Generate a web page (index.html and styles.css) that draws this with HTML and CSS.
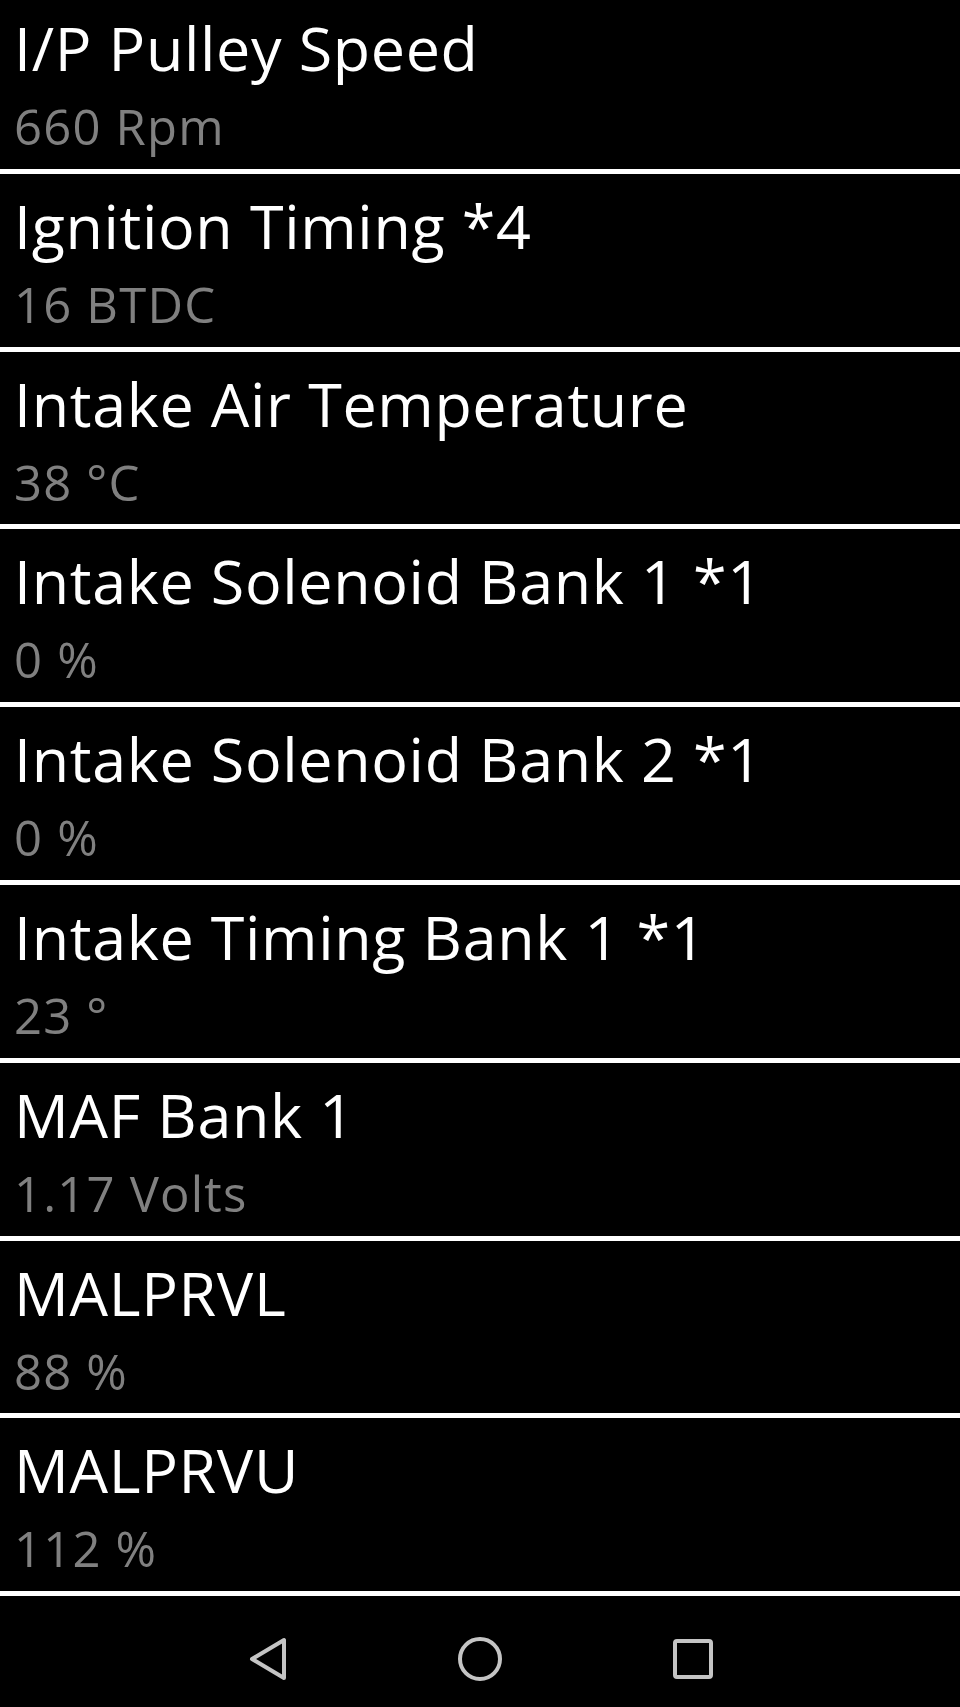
FILE: index.html
```html
<!DOCTYPE html>
<html lang="en">
<head>
  <meta charset="UTF-8">
  <meta name="viewport" content="width=device-width, initial-scale=1.0">
  <title>Live Data</title>
  <link rel="stylesheet" href="styles.css">
</head>
<body>
  <ul class="pid-list">
    <li class="pid-row">
      <div class="pid-name">I/P Pulley Speed</div>
      <div class="pid-value">660 Rpm</div>
    </li>
    <li class="pid-row">
      <div class="pid-name">Ignition Timing *4</div>
      <div class="pid-value">16 BTDC</div>
    </li>
    <li class="pid-row">
      <div class="pid-name">Intake Air Temperature</div>
      <div class="pid-value">38 °C</div>
    </li>
    <li class="pid-row">
      <div class="pid-name">Intake Solenoid Bank 1 *1</div>
      <div class="pid-value">0 %</div>
    </li>
    <li class="pid-row">
      <div class="pid-name">Intake Solenoid Bank 2 *1</div>
      <div class="pid-value">0 %</div>
    </li>
    <li class="pid-row">
      <div class="pid-name">Intake Timing Bank 1 *1</div>
      <div class="pid-value">23 °</div>
    </li>
    <li class="pid-row">
      <div class="pid-name">MAF Bank 1</div>
      <div class="pid-value">1.17 Volts</div>
    </li>
    <li class="pid-row">
      <div class="pid-name">MALPRVL</div>
      <div class="pid-value">88 %</div>
    </li>
    <li class="pid-row">
      <div class="pid-name">MALPRVU</div>
      <div class="pid-value">112 %</div>
    </li>
  </ul>

  <nav class="nav-bar">
    <svg class="nav-icon" width="48" height="48" viewBox="0 0 48 48">
      <polygon points="9,24 41,5 41,43" />
    </svg>
    <svg class="nav-icon" width="48" height="48" viewBox="0 0 48 48">
      <circle cx="24" cy="24" r="20" />
    </svg>
    <svg class="nav-icon" width="48" height="48" viewBox="0 0 48 48">
      <rect x="6" y="6" width="36" height="36" rx="2" />
    </svg>
  </nav>
</body>
</html>
```

FILE: styles.css
```css
html, body {
  height: 100%;
}
body {
  font-family: "Open Sans", "DejaVu Sans", sans-serif;
  background-color: #000;
  color: #fff;
  margin: 0;
  display: flex;
  flex-direction: column;
  overflow: hidden;
}
.pid-list {
  list-style: none;
  margin: -4px 0 0;
  padding: 0;
}
.pid-row {
  height: 156.8px;
  padding: 16px 14px 0;
  border-bottom: 5px solid #fff;
}
.pid-name {
  font-size: 61px;
  line-height: 72px;
  letter-spacing: 0.65px;
  white-space: nowrap;
}
.pid-value {
  padding-top: 4px;
  font-size: 49px;
  line-height: 77px;
  letter-spacing: 1.2px;
  color: #808080;
  white-space: nowrap;
}
.nav-bar {
  flex: 1;
  display: flex;
  justify-content: center;
  align-items: flex-start;
  gap: 165px;
  padding-top: 39px;
}
.nav-icon {
  fill: none;
  stroke: #c4c4c4;
  stroke-width: 4;
  stroke-linejoin: round;
}
```
